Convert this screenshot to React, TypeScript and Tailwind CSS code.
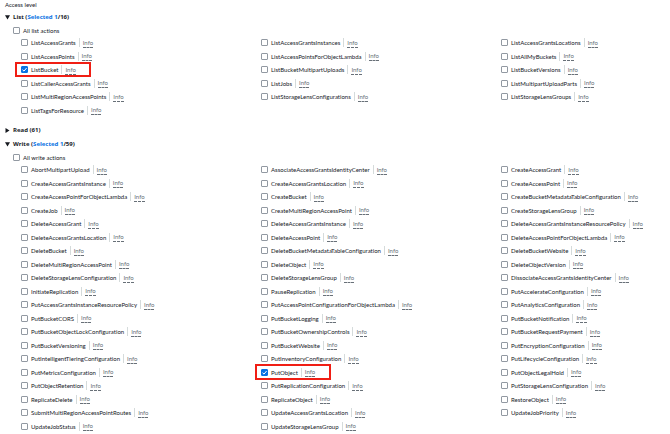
// AccessLevelPicker.tsx
import { useState } from "react";
import type { ReactNode } from "react";

// Actions are listed row by row, three to a row
const listActions = [
  "ListAccessGrants", "ListAccessGrantsInstances", "ListAccessGrantsLocations",
  "ListAccessPoints", "ListAccessPointsForObjectLambda", "ListAllMyBuckets",
  "ListBucket", "ListBucketMultipartUploads", "ListBucketVersions",
  "ListCallerAccessGrants", "ListJobs", "ListMultipartUploadParts",
  "ListMultiRegionAccessPoints", "ListStorageLensConfigurations", "ListStorageLensGroups",
  "ListTagsForResource",
];

const writeActions = [
  "AbortMultipartUpload", "AssociateAccessGrantsIdentityCenter", "CreateAccessGrant",
  "CreateAccessGrantsInstance", "CreateAccessGrantsLocation", "CreateAccessPoint",
  "CreateAccessPointForObjectLambda", "CreateBucket", "CreateBucketMetadataTableConfiguration",
  "CreateJob", "CreateMultiRegionAccessPoint", "CreateStorageLensGroup",
  "DeleteAccessGrant", "DeleteAccessGrantsInstance", "DeleteAccessGrantsInstanceResourcePolicy",
  "DeleteAccessGrantsLocation", "DeleteAccessPoint", "DeleteAccessPointForObjectLambda",
  "DeleteBucket", "DeleteBucketMetadataTableConfiguration", "DeleteBucketWebsite",
  "DeleteMultiRegionAccessPoint", "DeleteObject", "DeleteObjectVersion",
  "DeleteStorageLensConfiguration", "DeleteStorageLensGroup", "DissociateAccessGrantsIdentityCenter",
  "InitiateReplication", "PauseReplication", "PutAccelerateConfiguration",
  "PutAccessGrantsInstanceResourcePolicy", "PutAccessPointConfigurationForObjectLambda", "PutAnalyticsConfiguration",
  "PutBucketCORS", "PutBucketLogging", "PutBucketNotification",
  "PutBucketObjectLockConfiguration", "PutBucketOwnershipControls", "PutBucketRequestPayment",
  "PutBucketVersioning", "PutBucketWebsite", "PutEncryptionConfiguration",
  "PutIntelligentTieringConfiguration", "PutInventoryConfiguration", "PutLifecycleConfiguration",
  "PutMetricsConfiguration", "PutObject", "PutObjectLegalHold",
  "PutObjectRetention", "PutReplicationConfiguration", "PutStorageLensConfiguration",
  "ReplicateDelete", "ReplicateObject", "RestoreObject",
  "SubmitMultiRegionAccessPointRoutes", "UpdateAccessGrantsLocation", "UpdateJobPriority",
  "UpdateJobStatus", "UpdateStorageLensGroup",
];

const highlighted = ["ListBucket", "PutObject"];

function Checkbox({ id, checked, onChange }: { id: string; checked: boolean; onChange: () => void }) {
  return (
    <span className="relative flex size-[7px] shrink-0">
      <input
        id={id}
        type="checkbox"
        checked={checked}
        onChange={onChange}
        className="size-[7px] appearance-none rounded-[1px] border border-[#9299a2] bg-white checked:border-[#0972e3] checked:bg-[#0972e3]"
      />
      {checked && (
        <svg viewBox="0 0 7 7" className="pointer-events-none absolute inset-0" fill="none" stroke="#fff">
          <path d="M1.5 3.7 3 5.1 5.6 2" />
        </svg>
      )}
    </span>
  );
}

function SectionHeader({ open, onToggle, children }: { open: boolean; onToggle: () => void; children: ReactNode }) {
  return (
    <button
      type="button"
      aria-expanded={open}
      onClick={onToggle}
      className="flex h-[14px] items-center gap-[3px] font-['Open_Sans','Noto_Sans',sans-serif] text-[6px] font-bold whitespace-nowrap text-[#16191f]"
    >
      <svg viewBox="0 0 5 5" className="size-[5px]" fill="currentColor">
        <path d={open ? "M0 .2h5L2.5 4.6z" : "M.5 0v5L4.5 2.5z"} />
      </svg>
      <span>{children}</span>
    </button>
  );
}

type ActionSectionProps = {
  title: string;
  allLabel: string;
  actions: string[];
  initial: string[];
};

function ActionSection({ title, allLabel, actions, initial }: ActionSectionProps) {
  const [open, setOpen] = useState(true);
  const [selected, setSelected] = useState(initial);
  const all = selected.length === actions.length;

  const toggle = (name: string) =>
    setSelected(selected.includes(name) ? selected.filter((n) => n !== name) : [...selected, name]);

  return (
    <section>
      <SectionHeader open={open} onToggle={() => setOpen(!open)}>
        {title} (<span className="text-[#0972e3]">Selected {selected.length}</span>/{actions.length})
      </SectionHeader>
      {open && (
        <>
          <div className="mt-px flex h-[11px] items-center gap-[3px] pl-[8px]">
            <Checkbox id={`all-${title}`} checked={all} onChange={() => setSelected(all ? [] : actions)} />
            <label htmlFor={`all-${title}`}>{allLabel}</label>
          </div>
          <ul className="grid auto-rows-[13px_14px] grid-cols-[240fr_240fr_169fr] pl-[16px]">
            {actions.map((name) => (
              <li key={name} className="relative flex items-center gap-[3px] whitespace-nowrap">
                <Checkbox id={name} checked={selected.includes(name)} onChange={() => toggle(name)} />
                <label htmlFor={name}>{name}</label>
                <span className="h-[9px] w-px bg-[#d5dbdb]" />
                <a
                  href="#info"
                  aria-label={`Info about ${name}`}
                  className="mt-px border-b border-dashed border-[#687078] leading-[8px] text-[#687078]"
                >
                  Info
                </a>
                {highlighted.includes(name) && (
                  <span className="pointer-events-none absolute -inset-y-px -left-[6px] w-[76px] border-2 border-[#f01e14]" />
                )}
              </li>
            ))}
          </ul>
        </>
      )}
    </section>
  );
}

export default function AccessLevelPicker() {
  const [readOpen, setReadOpen] = useState(false);

  return (
    <main className="bg-white pl-[5px] font-['Lato','Noto_Sans',sans-serif] text-[6px] leading-[9px] text-[#16191f] [font-variant-ligatures:none]">
      <h2 className="mb-px h-[9px]">Access level</h2>
      <ActionSection title="List" allLabel="All list actions" actions={listActions} initial={["ListBucket"]} />
      <section className="mt-[6px]">
        <SectionHeader open={readOpen} onToggle={() => setReadOpen(!readOpen)}>
          Read (61)
        </SectionHeader>
      </section>
      <ActionSection title="Write" allLabel="All write actions" actions={writeActions} initial={["PutObject"]} />
    </main>
  );
}
